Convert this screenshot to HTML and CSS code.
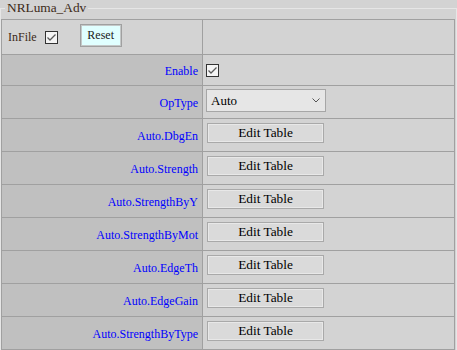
FILE: index.html
```html
<!DOCTYPE html>
<html lang="en">
<head>
    <meta charset="UTF-8">
    <meta name="viewport" content="width=device-width, initial-scale=1.0">
    <title>NRLuma_Adv</title>
    <link rel="stylesheet" href="styles.css">
</head>
<body>
    <fieldset class="panel">
        <legend>NRLuma_Adv</legend>
        <div class="param-grid">
            <div class="cell head-left">
                <span class="infile">InFile</span>
                <span class="check">
                    <svg width="11" height="11" viewBox="0 0 11 11"><polyline points="1.5,5.5 4,8 9.5,2.5" fill="none" stroke="#5a5a5a" stroke-width="1.3"/></svg>
                </span>
                <button class="reset">Reset</button>
            </div>
            <div class="cell head-right"></div>

            <div class="cell label">Enable</div>
            <div class="cell value">
                <span class="check">
                    <svg width="11" height="11" viewBox="0 0 11 11"><polyline points="1.5,5.5 4,8 9.5,2.5" fill="none" stroke="#5a5a5a" stroke-width="1.3"/></svg>
                </span>
            </div>

            <div class="cell label">OpType</div>
            <div class="cell value top">
                <div class="select">
                    <span>Auto</span>
                    <svg width="8" height="5" viewBox="0 0 8 5"><polyline points="0.5,0.5 4,4 7.5,0.5" fill="none" stroke="#555" stroke-width="1"/></svg>
                </div>
            </div>

            <div class="cell label">Auto.DbgEn</div>
            <div class="cell value top"><button class="edit">Edit Table</button></div>

            <div class="cell label">Auto.Strength</div>
            <div class="cell value top"><button class="edit">Edit Table</button></div>

            <div class="cell label">Auto.StrengthByY</div>
            <div class="cell value top"><button class="edit">Edit Table</button></div>

            <div class="cell label">Auto.StrengthByMot</div>
            <div class="cell value top"><button class="edit">Edit Table</button></div>

            <div class="cell label">Auto.EdgeTh</div>
            <div class="cell value top"><button class="edit">Edit Table</button></div>

            <div class="cell label">Auto.EdgeGain</div>
            <div class="cell value top"><button class="edit">Edit Table</button></div>

            <div class="cell label">Auto.StrengthByType</div>
            <div class="cell value top"><button class="edit">Edit Table</button></div>
        </div>
    </fieldset>
</body>
</html>
```

FILE: styles.css
```css
body {
    margin: 0;
    background-color: #d3d3d3;
    font-family: 'Liberation Serif', 'Times New Roman', serif;
    color: #3c2a18;
}

.panel {
    margin: 0;
    padding: 3px 0 0 0;
    border: 1px solid #e6e6e6;
    min-width: 0;
}

.panel legend {
    margin-left: 4px;
    padding: 0 2px;
    font-family: 'Liberation Serif', 'Times New Roman', serif;
    font-size: 13.33px;
    line-height: 16px;
    color: #3c2a18;
}

.param-grid {
    display: grid;
    grid-template-columns: 201px 252px;
    grid-template-rows: 35px 31px repeat(8, 33px);
    width: max-content;
    border-left: 1px solid #a0a0a0;
    border-top: 1px solid #a0a0a0;
}

.cell {
    box-sizing: border-box;
    border-right: 1px solid #a0a0a0;
    border-bottom: 1px solid #a0a0a0;
    background-color: #d3d3d3;
    display: flex;
    align-items: center;
}

.head-left {
    padding-left: 6px;
    font-size: 12px;
}

.infile {
    margin-right: 8px;
}

.label {
    background-color: #c0c0c0;
    justify-content: flex-end;
    padding: 3px 4px 0 0;
    font-size: 12px;
    color: #0000ff;
}

.value {
    padding-left: 3px;
}

.value.top {
    align-items: flex-start;
    padding-top: 3px;
}

.check {
    box-sizing: border-box;
    width: 13px;
    height: 13px;
    border: 1px solid #333;
    background-color: #f4f4f4;
    display: flex;
    align-items: center;
    justify-content: center;
}

.reset {
    box-sizing: border-box;
    width: 42px;
    height: 23px;
    margin: 0 0 3px 22px;
    padding: 0;
    border: 1px solid #a0a0a0;
    box-shadow: inset 0 0 0 1px #c4c8c8;
    background-color: #e0ffff;
    font-family: 'Liberation Serif', 'Times New Roman', serif;
    font-size: 12px;
    color: #1a1a1a;
}

.select {
    box-sizing: border-box;
    width: 120px;
    height: 23px;
    border: 1px solid #a6a6a6;
    background-color: #e6e6e6;
    display: flex;
    align-items: center;
    justify-content: space-between;
    padding: 0 5px 0 4px;
    font-family: 'Liberation Serif', 'Times New Roman', serif;
    font-size: 13px;
    color: #000;
}

.edit {
    box-sizing: border-box;
    width: 117px;
    height: 20px;
    margin: 1px 0 0 1px;
    padding: 0;
    border: 1px solid #a9a9a9;
    box-shadow: inset 0 0 0 1px #e8e8e8;
    background-color: #dadada;
    font-family: 'Liberation Serif', 'Times New Roman', serif;
    font-size: 13.33px;
    line-height: 18px;
    color: #000;
}
```
